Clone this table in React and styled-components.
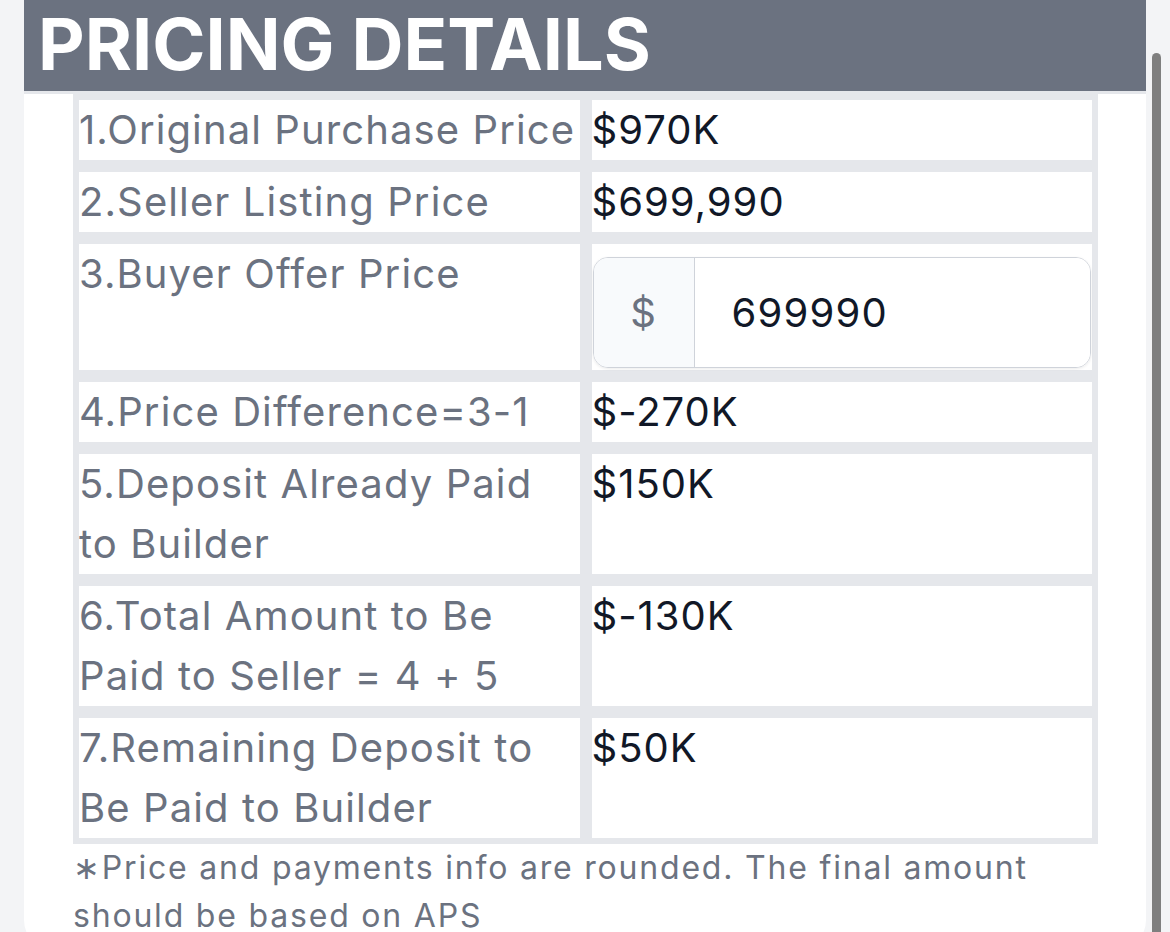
import React from "react";
import styled, { createGlobalStyle } from "styled-components";

const rows = [
  { label: "1.Original Purchase Price", value: "$970K" },
  { label: "2.Seller Listing Price", value: "$699,990" },
  { label: "3.Buyer Offer Price", input: "699990" },
  { label: "4.Price Difference=3-1", value: "$-270K" },
  { label: "5.Deposit Already Paid to Builder", value: "$150K" },
  { label: "6.Total Amount to Be Paid to Seller = 4 + 5", value: "$-130K" },
  { label: "7.Remaining Deposit to Be Paid to Builder", value: "$50K" },
];

const PricingDetails = () => {
  return (
    <StyledPage>
      <StyledCard>
        <StyledHeader>PRICING DETAILS</StyledHeader>
        <StyledBody>
          <StyledTable>
            {rows.map((row) => (
              <React.Fragment key={row.label}>
                <StyledCell $label>{row.label}</StyledCell>
                <StyledCell>
                  {row.input ? (
                    <StyledInputGroup>
                      <StyledAddon>$</StyledAddon>
                      <StyledInput defaultValue={row.input} />
                    </StyledInputGroup>
                  ) : (
                    row.value
                  )}
                </StyledCell>
              </React.Fragment>
            ))}
          </StyledTable>
          <StyledNote>
            ∗Price and payments info are rounded. The final amount should be
            based on APS
          </StyledNote>
        </StyledBody>
      </StyledCard>
      <StyledScrollThumb />
    </StyledPage>
  );
};

const GlobalStyle = createGlobalStyle`
  html, body {
    margin: 0;
    overflow: hidden;
    background: #f3f4f6;
    font-family: Inter, "Noto Sans", sans-serif;
  }
  * {
    box-sizing: border-box;
  }
`;

const StyledPage = styled.div`
  padding: 0 24px;
  min-height: 100vh;
`;
const StyledCard = styled.div`
  background: #fff;
  border-radius: 0 0 30px 30px;
  overflow: hidden;
  padding-bottom: 10px;
`;
const StyledHeader = styled.h1`
  margin: 0;
  padding: 0 14px 3px;
  background: #6b7280;
  border-bottom: 3px solid #e5e7eb;
  color: #fff;
  font-size: 72px;
  font-weight: 700;
  line-height: 88px;
  white-space: nowrap;
`;
const StyledBody = styled.div`
  padding: 0 48px 0 49px;
`;
const StyledTable = styled.div`
  display: grid;
  grid-template-columns: minmax(0, 1fr) minmax(0, 1fr);
  gap: 12px;
  padding: 6px;
  background: #e5e7eb;
`;
const StyledCell = styled.div`
  min-width: 0;
  background: #fff;
  padding: 0;
  font-size: 40px;
  line-height: 60px;
  letter-spacing: ${(p) => (p.$label ? "1.1px" : "1px")};
  color: ${(p) => (p.$label ? "#6b7280" : "#111827")};
`;
const StyledInputGroup = styled.div`
  display: flex;
  height: 111px;
  margin: 13px 1px 2px;
  border: 1.5px solid #cfd3da;
  border-radius: 15px;
  overflow: hidden;
  box-shadow: 0 1px 3px rgba(0, 0, 0, 0.08);
`;
const StyledAddon = styled.span`
  display: flex;
  align-items: center;
  justify-content: center;
  flex: 0 0 101px;
  background: #f8fafc;
  border-right: 1.5px solid #cfd3da;
  color: #6b7280;
  font-size: 40px;
`;
const StyledInput = styled.input`
  flex: 1;
  width: 0;
  min-width: 0;
  border: none;
  outline: none;
  padding: 0 0 0 37px;
  font-family: inherit;
  font-size: 40px;
  letter-spacing: 1.2px;
  color: #111827;
  background: #fff;
`;
const StyledNote = styled.p`
  margin: 0;
  font-size: 32px;
  line-height: 48px;
  letter-spacing: 1.8px;
  color: #6b7280;
`;
const StyledScrollThumb = styled.div`
  position: fixed;
  top: 53px;
  right: 9px;
  bottom: -10px;
  width: 9px;
  border-radius: 5px;
  background: #7f7f7f;
`;

const App = () => (
  <>
    <GlobalStyle />
    <PricingDetails />
  </>
);

export default App;
